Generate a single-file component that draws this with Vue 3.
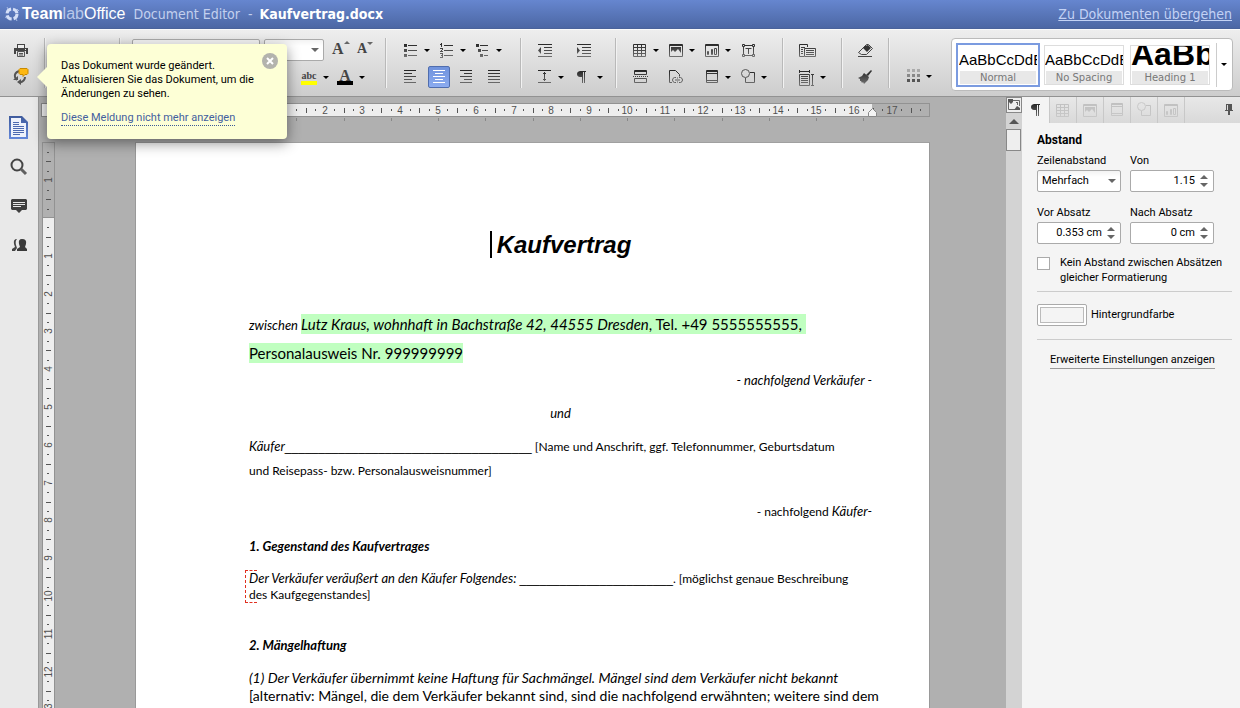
<script setup>
import { ref } from 'vue'

const CM = 37.8

const listTools = [
  [{ icon: 'bullets', label: 'Aufzählung', menu: true }, { icon: 'numbers', label: 'Nummerierung', menu: true }, { icon: 'levels', label: 'Liste mit mehreren Ebenen', menu: true }],
  [{ icon: 'left', label: 'Linksbündig' }, { icon: 'center', label: 'Zentriert', active: true }, { icon: 'right', label: 'Rechtsbündig' }, { icon: 'justify', label: 'Blocksatz' }],
]
const indentTools = [
  [{ icon: 'outdent', label: 'Einzug verkleinern', wide: true }, { icon: 'indent', label: 'Einzug vergrößern' }],
  [{ icon: 'spacing', label: 'Zeilenabstand', menu: true }, { icon: 'pilcrow', label: 'Formatierungszeichen', menu: true }],
]
const insertTools = [
  [{ icon: 'table', label: 'Tabelle', menu: true }, { icon: 'picture', label: 'Bild', menu: true }, { icon: 'chart', label: 'Diagramm', menu: true }, { icon: 'textbox', label: 'Textfeld' }],
  [{ icon: 'break', label: 'Seitenumbruch', wide: true }, { icon: 'link', label: 'Hyperlink', wide: true }, { icon: 'header', label: 'Kopfzeile', menu: true }, { icon: 'shape', label: 'Form', menu: true }],
]
const pageTools = [
  [{ icon: 'orient', label: 'Ausrichtung' }],
  [{ icon: 'size', label: 'Seitengröße', menu: true }],
]
const clearTools = [
  [{ icon: 'eraser', label: 'Formatierung löschen' }],
  [{ icon: 'brush', label: 'Format übertragen' }],
]
const schemeTools = [[], [{ icon: 'grid', label: 'Farbschema', menu: true }]]

const groups = [
  { name: 'list', rows: listTools },
  { name: 'indents', rows: indentTools },
  { name: 'insert', rows: insertTools },
  { name: 'layout', rows: pageTools },
  { name: 'clear', rows: clearTools },
  { name: 'scheme', rows: schemeTools },
]

const styles = [
  { name: 'Normal', sample: 'AaBbCcDdE', active: true },
  { name: 'No Spacing', sample: 'AaBbCcDdE' },
  { name: 'Heading 1', sample: 'AaBb', big: true },
]

const rail = [
  { icon: 'doc', label: 'Datei' },
  { icon: 'search', label: 'Suchen' },
  { icon: 'comment', label: 'Kommentare' },
  { icon: 'people', label: 'Benutzer' },
]

const tabs = [
  { icon: 'pilcrow', label: 'Absatz', active: true },
  { icon: 'table', label: 'Tabelle' },
  { icon: 'picture', label: 'Bild' },
  { icon: 'header', label: 'Kopfzeile' },
  { icon: 'shape', label: 'Form' },
  { icon: 'chart', label: 'Diagramm' },
]

function marks(from, to, origin) {
  const out = []
  for (let q = from; q <= to; q++) {
    if (q === 0) continue
    const pos = Math.round(origin + (q * CM) / 4)
    if (q % 4 === 0) out.push({ pos, text: Math.abs(q / 4) })
    else if (q % 2 === 0) out.push({ pos, size: 5 })
    else out.push({ pos, size: 2 })
  }
  return out
}
const hMarks = marks(5, 71, 114)
const vMarks = marks(-7, 60, 76)
const tabStops = Array.from({ length: 14 }, (_, i) => Math.round(114 + (i * CM * 5) / 4))

const noGap = ref(false)
const showTip = ref(true)
const lineMode = ref('Mehrfach')
const lineValue = ref('1.15')
const before = ref('0.353 cm')
const after = ref('0 cm')
const blankLong = '_'.repeat(37)
const blankShort = '_'.repeat(23)
</script>

<template>
  <div class="app">
    <svg class="sprite" aria-hidden="true">
      <defs>
        <linearGradient id="ink" gradientUnits="userSpaceOnUse" x1="0" y1="2" x2="0" y2="16">
          <stop offset="0" stop-color="#222" /><stop offset="1" stop-color="#707070" />
        </linearGradient>
        <linearGradient id="blue" x1="0" y1="0" x2="0" y2="1">
          <stop offset="0" stop-color="#3f5b9c" /><stop offset="1" stop-color="#6488da" />
        </linearGradient>
      </defs>
      <symbol id="i-bullets" viewBox="0 0 18 18"><path fill="url(#ink)" d="M2 3h3v3H2zM2 8h3v3H2zM2 13h3v3H2zM6 4h9v1H6zM6 9h9v1H6zM6 14h9v1H6z" /></symbol>
      <symbol id="i-numbers" viewBox="0 0 18 18"><path fill="url(#ink)" d="M3 2h1v4H3zM2 3h1v1H2zM2 7h3v1H2zM4 8h1v1H4zM3 9h1v1H3zM2 10h3v1H2zM2 12h3v1H2zM3 14h2v1H3zM4 13h1v1H4zM2 16h3v1H2zM4 15h1v1H4zM6 4h9v1H6zM6 9h9v1H6zM6 14h9v1H6z" /></symbol>
      <symbol id="i-levels" viewBox="0 0 18 18"><path fill="url(#ink)" d="M2 3h3v3H2zM4 8h3v3H4zM6 13h3v3H6zM6 4h8v1H6zM8 9h6v1H8zM10 14h4v1H10z" /></symbol>
      <symbol id="i-left" viewBox="0 0 18 18"><path fill="url(#ink)" d="M2 2h12v1H2zM2 5h8v1H2zM2 8h12v1H2zM2 11h8v1H2zM2 14h12v1H2z" /></symbol>
      <symbol id="i-center" viewBox="0 0 18 18"><path fill="#fff" d="M3 2h12v1H3zM5 5h8v1H5zM3 8h12v1H3zM5 11h8v1H5zM3 14h12v1H3z" /></symbol>
      <symbol id="i-right" viewBox="0 0 18 18"><path fill="url(#ink)" d="M2 2h12v1H2zM6 5h8v1H6zM2 8h12v1H2zM6 11h8v1H6zM2 14h12v1H2z" /></symbol>
      <symbol id="i-justify" viewBox="0 0 18 18"><path fill="url(#ink)" d="M2 2h12v1H2zM2 5h12v1H2zM2 8h12v1H2zM2 11h12v1H2zM2 14h12v1H2z" /></symbol>
      <symbol id="i-outdent" viewBox="0 0 18 18"><path fill="url(#ink)" d="M2 3h14v1H2zM8 6h8v1H8zM8 9h8v1H8zM8 12h8v1H8zM2 15h14v1H2zM5 6v7L2 9.500z" /></symbol>
      <symbol id="i-indent" viewBox="0 0 18 18"><path fill="url(#ink)" d="M2 3h14v1H2zM7 6h9v1H7zM7 9h9v1H7zM7 12h9v1H7zM2 15h14v1H2zM2 6v7l3-3.500z" /></symbol>
      <symbol id="i-spacing" viewBox="0 0 18 18"><path fill="url(#ink)" d="M2 2h13v1H2zM2 14h13v1H2zM8 4h1v9H8zM7 5h3v1H7zM7 11h3v1H7z" /></symbol>
      <symbol id="i-pilcrow" viewBox="0 0 18 18"><path fill="url(#ink)" d="M5 3h6v1h-1v11H9V4H8v11H7V9H5Q2 8.500 2 6t3-3z" /></symbol>
      <symbol id="i-table" viewBox="0 0 18 18"><path fill="none" stroke="url(#ink)" d="M2.500 3.500h12v12h-12zM2.500 6.500h12M2.500 9.500h12M2.500 12.500h12M6.500 3.500v12M10.500 3.500v12" /></symbol>
      <symbol id="i-picture" viewBox="0 0 18 18"><path fill="none" stroke="url(#ink)" d="M2.500 3.500h13v12h-13zM2 4.500h14" /><path fill="url(#ink)" d="M4 11V6h10v6l-3-4-3 3-2-2z" /></symbol>
      <symbol id="i-chart" viewBox="0 0 18 18"><path fill="none" stroke="url(#ink)" d="M2.500 3.500h13v12h-13zM2 4.500h14M4.500 10.500h1v3h-1zM8.500 8.500h1v5h-1zM11.500 7.500h2v6h-2z" /></symbol>
      <symbol id="i-textbox" viewBox="0 0 18 18"><path fill="none" stroke="url(#ink)" d="M4.500 4.500h10v10h-10zM6.500 7.500h6M9.500 7v6" /><path fill="#ddd" stroke="url(#ink)" d="M3.500 3.500h2v2h-2zM13.500 3.500h2v2h-2zM3.500 13.500h2v2h-2zM13.500 13.500h2v2h-2z" /></symbol>
      <symbol id="i-break" viewBox="0 0 18 18"><path fill="none" stroke="url(#ink)" d="M3.500 2.500h12v4h-12zM3.500 10.500h12v4h-12zM3 3.500h13" /><path stroke="#444" stroke-dasharray="1 1" d="M2 8.500h15" /></symbol>
      <symbol id="i-link" viewBox="0 0 18 18"><path fill="none" stroke="url(#ink)" d="M5 14.500H2.500v-12h6l4 4v2" /><path fill="none" stroke="#606060" d="M9 14.500H7.500Q5.500 14 5.500 12t2-2.500H9M12 9.500h1.500Q15.500 10 15.500 12t-2 2.500H12M8 12h5M10.500 9.500v1M10.500 13.500v1" /></symbol>
      <symbol id="i-header" viewBox="0 0 18 18"><path fill="none" stroke="url(#ink)" d="M3.500 2.500h11v12h-11zM3 3.500h12M3.500 5.500h11M3.500 12.500h11" /></symbol>
      <symbol id="i-shape" viewBox="0 0 18 18"><path fill="none" stroke="url(#ink)" d="M11 4.500h4.500v10h-9V10" /><circle cx="6.500" cy="5.500" r="4" fill="none" stroke="#555" /></symbol>
      <symbol id="i-orient" viewBox="0 0 18 18"><path fill="none" stroke="url(#ink)" d="M6 15.500H1.500v-12h8V6M3 6.500h4M3 8.500h2M3 10.500h2M3 12.500h2M6.500 7.500h11v8h-11zM8 9.500h8M8 11.500h8M8 13.500h8" /></symbol>
      <symbol id="i-size" viewBox="0 0 18 18"><path fill="none" stroke="url(#ink)" d="M1.500 6.500h10v11h-10zM3 8.500h7M3 10.500h7M3 12.500h7M3 14.500h7M1.500 2v3M11.500 2v3M1.500 3.500h10M13 6.500h3M13 17.500h3M14.500 6.500v11" /></symbol>
      <symbol id="i-eraser" viewBox="0 0 18 18"><path fill="none" stroke="#444" d="M2.500 11.500l8-8h2l4 4-6 6h-5zM2 15.500h14" /><path fill="#333" d="M9 5l3-1 3 3-4 4-4-4z" /></symbol>
      <symbol id="i-brush" viewBox="0 0 18 18"><path fill="#333" d="M15 2l1 1-4 5-2-1z" /><path fill="url(#ink)" d="M8 5l5 4-1 3-4 4-1-2-1 1-1-2-1 0 0-2-2-1 4-2z" /></symbol>
      <symbol id="i-grid" viewBox="0 0 18 18"><path fill="#aaa" d="M3 2h3v3H3zM8 2h3v3H8zM13 2h3v3h-3z" /><path fill="#888" d="M3 7h3v3H3zM8 7h3v3H8zM13 7h3v3h-3z" /><path fill="#555" d="M3 12h3v3H3zM8 12h3v3H8zM13 12h3v3h-3z" /></symbol>
      <symbol id="i-print" viewBox="0 0 18 18"><path fill="#444" d="M5 3h8v4h3v6h-2v-3H4v3H2V7h3z" /><path fill="#eee" d="M6 4h6v3H6zM13 8h1v1h-1z" /><path fill="none" stroke="#555" d="M5.500 10.500h7v5h-7zM7 12.500h4M7 14h4" /></symbol>
      <symbol id="i-sync" viewBox="0 0 18 18"><path fill="none" stroke="#555" stroke-width="2" d="M7 3Q2 5 3 9q0 1 2 3M13 9q0 4-5 5.500" /><path fill="#555" d="M1 12h5V8zM9 11v6l-4-3z" /><path fill="#fdb813" stroke="#c98a00" d="M8 .500h7l1 1v4l-1 1h-2l-2 2v-2H8l-1-1v-4z" /></symbol>
      <symbol id="i-file" viewBox="0 0 18 18"><path fill="none" stroke="url(#ink)" stroke-width="2" d="M5 4h8v10H5z" /></symbol>
      <symbol id="i-doc" viewBox="0 0 20 24"><path fill="url(#blue)" d="M0 0h13l6 6v17H0z" /><path fill="#eef2fb" d="M2 2h10v5h5v14H2z" /><path fill="#4c69b0" d="M4 6h6v1H4zM4 8h6v1H4zM4 10h11v1H4zM4 12h11v1H4zM4 14h11v1H4zM4 16h11v1H4zM4 18h7v1H4z" /></symbol>
      <symbol id="i-search" viewBox="0 0 20 24"><circle cx="8" cy="10" r="5.500" fill="none" stroke="#444" stroke-width="2" /><path stroke="#606060" stroke-width="3" d="M12 14l5 5" /></symbol>
      <symbol id="i-comment" viewBox="0 0 20 24"><path fill="#404040" d="M3 5h14l1 1v9l-1 1h-4l-3 3-3-3H3l-1-1V6z" /><path fill="#e9e9e9" d="M4 8h12v1H4zM4 10h12v1H4zM4 12h8v1H4z" /></symbol>
      <symbol id="i-people" viewBox="0 0 20 24"><path fill="#444" d="M8 6Q4 6 5 11l1 3-3 2v2h3l2-3-1-3q-1-4 1-6z" /><path fill="#3a3a3a" d="M13 6q5 0 4 5l-1 3 2 2v2H8v-2l3-2-1-3q-1-5 3-5z" /></symbol>
    </svg>

    <header class="titlebar">
      <svg class="logo" viewBox="0 0 16 16" aria-hidden="true"><circle cx="8" cy="8" r="5" fill="none" stroke="#d4dff7" stroke-width="3" stroke-dasharray="6 2" /><path fill="none" stroke="#a8bce6" d="M3 12l-2-1M13 3l2 2M4 3L3 1M12 13l1 2" /></svg>
      <span class="brand"><b>Team</b><i>lab</i>Office</span>
      <span class="product">Document Editor&nbsp; -</span>
      <h1>Kaufvertrag.docx</h1>
      <a href="#documents">Zu Dokumenten übergehen</a>
    </header>

    <div class="toolbar">
      <div class="group g-main">
        <button class="tool" aria-label="Drucken"><svg><use href="#i-print" /></svg></button>
        <button class="tool" aria-label="Aktualisieren"><svg><use href="#i-sync" /></svg></button>
      </div>
      <div class="group g-file">
        <div class="row">
          <button class="tool" aria-label="Kopieren"><svg><use href="#i-file" /></svg></button>
          <button class="tool" aria-label="Einfügen"><svg><use href="#i-file" /></svg></button>
        </div>
        <div class="row"></div>
      </div>
      <div class="group g-font">
        <div class="row">
          <div class="combo family"><select aria-label="Schriftart"><option></option></select></div>
          <div class="combo points"><select aria-label="Schriftgrad"><option></option></select></div>
          <button class="tool letter" aria-label="Schrift vergrößern">A<span class="tri up"></span></button>
          <button class="tool letter small" aria-label="Schrift verkleinern">A<span class="tri"></span></button>
        </div>
        <div class="row colours">
          <button class="tool menu swatch" aria-label="Hervorheben"><span class="mark yellow">abc</span><span class="caret"></span></button>
          <button class="tool menu swatch" aria-label="Schriftfarbe"><span class="mark black">A</span><span class="caret"></span></button>
        </div>
      </div>
      <div v-for="g in groups" :key="g.name" class="group" :class="'g-' + g.name">
        <div v-for="(row, r) in g.rows" :key="r" class="row">
          <button v-for="t in row" :key="t.icon" class="tool" :class="{ menu: t.menu, wide: t.wide, active: t.active }" :aria-label="t.label">
            <svg><use :href="'#i-' + t.icon" /></svg>
            <span v-if="t.menu" class="caret"></span>
          </button>
        </div>
      </div>
      <div class="gallery">
        <button v-for="s in styles" :key="s.name" class="style" :class="{ active: s.active, big: s.big }">
          <span class="sample">{{ s.sample }}</span>
          <span class="caption">{{ s.name }}</span>
        </button>
        <button class="more" aria-label="Weitere Formatvorlagen"><span class="caret"></span></button>
      </div>
    </div>

    <div class="body">
      <nav class="rail">
        <button v-for="r in rail" :key="r.icon" :aria-label="r.label"><svg><use :href="'#i-' + r.icon" /></svg></button>
      </nav>

      <main class="editor">
        <div class="corner"><span></span></div>
        <div class="hruler">
          <svg>
            <rect class="edge" x="0" y="0" width="795" height="14" />
            <rect class="bar" x="1" y="1" width="793" height="12" />
            <rect class="live" x="114" y="1" width="623" height="12" />
            <template v-for="m in hMarks" :key="m.pos">
              <text v-if="m.text" :x="m.pos" y="11">{{ m.text }}</text>
              <rect v-else class="tick" :x="m.pos" :y="7 - Math.floor(m.size / 2)" width="1" :height="m.size" />
            </template>
            <rect v-for="t in tabStops" :key="t" class="stop" :x="t" y="15" width="1" height="3" />
            <path class="marker" d="M733.500 13.500v-4l4-4 4 4v4z" />
          </svg>
        </div>
        <div class="vruler">
          <svg>
            <rect class="edge" x="0" y="0" width="13" height="700" />
            <rect class="bar" x="1" y="1" width="11" height="74" />
            <rect class="live" x="1" y="76" width="11" height="624" />
            <template v-for="m in vMarks" :key="m.pos">
              <text v-if="m.text" :transform="`translate(10 ${m.pos}) rotate(-90)`">{{ m.text }}</text>
              <rect v-else class="tick" :x="6 - Math.floor(m.size / 2)" :y="m.pos" :width="m.size" height="1" />
            </template>
          </svg>
        </div>
        <div class="canvas">
          <article class="page">
            <h2><span class="cursor"></span>Kaufvertrag</h2>
            <p class="party"><em class="minor">zwischen </em><mark><em>Lutz Kraus, wohnhaft in Bachstraße 42, 44555 Dresden</em>, Tel. +49 5555555555, </mark><br /><mark>Personalausweis Nr. 999999999</mark></p>
            <p class="end"><em>- nachfolgend Verkäufer -</em></p>
            <p class="mid"><em>und</em></p>
            <p class="buyer"><em>Käufer</em><span class="blank">{{ blankLong }}</span> [Name und Anschrift, ggf. Telefonnummer, Geburtsdatum<br />und Reisepass- bzw. Personalausweisnummer]</p>
            <p class="end second">- nachfolgend <em>Käufer-</em></p>
            <h3>1. Gegenstand des Kaufvertrages</h3>
            <p class="locked"><em>Der Verkäufer veräußert an den Käufer Folgendes: </em><span class="blank">{{ blankShort }}</span>. [möglichst genaue Beschreibung<br />des Kaufgegenstandes]</p>
            <h3 class="later">2. Mängelhaftung</h3>
            <p class="liability"><em>(1) Der Verkäufer übernimmt keine Haftung für Sachmängel. Mängel sind dem Verkäufer nicht bekannt</em><br />[alternativ: Mängel, die dem Verkäufer bekannt sind, sind die nachfolgend erwähnten; weitere sind dem</p>
          </article>
        </div>
      </main>

      <div class="scroll">
        <button class="rulers" aria-label="Lineale"><svg viewBox="0 0 14 14"><path fill="none" stroke="#666" d="M1.500 3v8.500H8M5 2.500h7.500V8M9 4.500h2M10.500 4v3" /><path fill="#555" d="M1 1h5v3L4 6 1 3zM7 12l3-4 3 2v2z" /></svg></button>
        <button class="up" aria-label="Nach oben"><span></span></button>
        <div class="thumb"></div>
      </div>

      <aside class="panel">
        <div class="tabs">
          <button v-for="t in tabs" :key="t.icon" :class="{ active: t.active }" :aria-label="t.label"><svg><use :href="'#i-' + t.icon" /></svg></button>
          <button class="pin" aria-label="Anheften"><svg viewBox="0 0 8 12"><path fill="#555" d="M1 0h6v6h1v1H5v4H3V7H0V6h1z" /><path fill="#ddd" d="M2 1h1v5H2z" /></svg></button>
        </div>
        <form class="settings" @submit.prevent>
          <h4>Abstand</h4>
          <div class="pair">
            <div class="field"><label for="mode">Zeilenabstand</label>
              <div class="combo"><select id="mode" v-model="lineMode"><option>Mehrfach</option></select></div></div>
            <div class="field"><label for="line">Von</label>
              <div class="spin"><input id="line" v-model="lineValue" type="text" /><button aria-label="Zeilenabstand ändern"><span class="tri up"></span><span class="tri"></span></button></div></div>
            <div class="field"><label for="before">Vor Absatz</label>
              <div class="spin"><input id="before" v-model="before" type="text" /><button aria-label="Abstand davor ändern"><span class="tri up"></span><span class="tri"></span></button></div></div>
            <div class="field"><label for="after">Nach Absatz</label>
              <div class="spin"><input id="after" v-model="after" type="text" /><button aria-label="Abstand danach ändern"><span class="tri up"></span><span class="tri"></span></button></div></div>
          </div>
          <label class="check"><input v-model="noGap" type="checkbox" /><span>Kein Abstand zwischen Absätzen<br />gleicher Formatierung</span></label>
          <div class="colour"><button id="bg" aria-labelledby="bg-label"><span></span></button><label id="bg-label" for="bg">Hintergrundfarbe</label></div>
          <div class="advanced"><a href="#advanced">Erweiterte Einstellungen anzeigen</a></div>
        </form>
      </aside>
    </div>

    <div v-if="showTip" class="tip" role="status">
      <button aria-label="Schließen" @click="showTip = false"><svg viewBox="0 0 16 16"><circle cx="8" cy="8" r="8" fill="#b3b3ad" /><path stroke="#fff" stroke-width="2" d="M5 5l6 6M11 5l-6 6" /></svg></button>
      <p>Das Dokument wurde geändert.<br />Aktualisieren Sie das Dokument, um die<br />Änderungen zu sehen.</p>
      <a href="#hide">Diese Meldung nicht mehr anzeigen</a>
    </div>
  </div>
</template>

<style>
body { margin: 0; }
</style>

<style scoped>
* { box-sizing: border-box; }
.app {
  position: relative;
  display: flex;
  flex-direction: column;
  height: 100vh;
  overflow: hidden;
  background: #b0b0b0;
  color: #000;
  font-family: Roboto, "DejaVu Sans Condensed", sans-serif;
  font-size: 11px;
}
.sprite { position: absolute; width: 0; height: 0; }
button { padding: 0; border: 0; background: none; font: inherit; color: inherit; }
h1, h2, h3, h4, p { margin: 0; }

.titlebar {
  display: flex;
  flex: none;
  align-items: center;
  height: 29px;
  padding: 0 8px 1px 4px;
  background: linear-gradient(#6686cf, #4c67a4);
  border-bottom: 1px solid #4a639b;
  color: #fff;
  font-family: "DejaVu Sans Condensed", "DejaVu Sans", sans-serif;
  font-size: 14px;
}
.logo { width: 16px; height: 16px; margin-right: 2px; }
.brand { margin-right: 8px; font-family: "Liberation Sans", sans-serif; font-size: 16px; }
.brand i { font-style: normal; color: #b9c8ea; }
.product { margin-right: 7px; color: #c3d0ee; }
.titlebar h1 { flex: 1; font-size: 14px; }
.titlebar a { color: #c3d2f5; }

.toolbar {
  display: flex;
  flex: none;
  align-items: flex-start;
  height: 68px;
  padding-top: 8px;
  background: linear-gradient(#eee, #cdcdcd);
  border-top: 1px solid #fafafa;
  border-bottom: 1px solid #929292;
}
.group {
  display: flex;
  flex: none;
  flex-direction: column;
  gap: 3px;
  height: 50px;
  padding-left: 9px;
  border-left: 1px solid #b9b9b9;
  box-shadow: inset 1px 0 #f2f2f2;
}
.g-main { width: 44px; padding-left: 7px; border: 0; box-shadow: none; }
.g-file { width: 75px; padding-left: 8px; }
.g-font { width: 266px; padding-left: 12px; }
.g-list { width: 135px; padding-left: 11px; }
.g-indents { width: 95px; padding-left: 10px; }
.g-insert { width: 167px; padding-left: 10px; }
.g-layout { width: 59px; padding-left: 10px; }
.g-clear { width: 47px; padding-left: 9px; }
.g-scheme { width: 60px; padding-left: 10px; }
.row { display: flex; align-items: center; height: 24px; }
.tool {
  position: relative;
  display: flex;
  flex: none;
  align-items: center;
  justify-content: flex-start;
  width: 28px;
  height: 24px;
  padding-left: 5px;
}
.tool svg { flex: none; width: 18px; height: 18px; }
.tool.menu, .tool.wide { width: 36px; }
.g-indents .tool { width: 39px; }
.tool.active {
  width: 22px;
  height: 22px;
  margin: 0 3px;
  padding-left: 1px;
  border: 1px solid #4f6dae;
  border-radius: 2px;
  background: linear-gradient(#6f92dc, #8cacf0);
}
.caret { width: 0; height: 0; margin-left: 4px; border: 3px solid transparent; border-top-color: #000; border-bottom: 0; }
.tri { width: 0; height: 0; border: 4px solid transparent; border-top-color: #666; border-bottom: 0; }
.tri.up { border-top: 0; border-bottom: 4px solid #666; }
.combo {
  position: relative;
  width: 84px;
  height: 22px;
}
.combo::after {
  content: "";
  position: absolute;
  top: 9px;
  right: 5px;
  border: 4px solid transparent;
  border-top-color: #666;
  border-bottom: 0;
  pointer-events: none;
}
.combo select {
  width: 100%;
  height: 100%;
  padding: 0 4px;
  appearance: none;
  border: 1px solid #aaa;
  border-radius: 2px;
  background: #fff linear-gradient(to bottom, #f3f3f3, #fff 6px);
  color: #000;
  font: inherit;
}
.family { width: 128px; margin-right: 4px; }
.points { width: 60px; margin-right: 3px; }
.letter { width: 25px; font: bold 16px "Liberation Serif", serif; color: #444; align-items: flex-start; padding-top: 2px; }
.letter.small { font-size: 14px; padding-top: 3px; }
.letter .tri { border-width: 3px 3px 0; margin-top: 1px; }
.letter .tri.up { border-width: 0 3px 3px; }
.colours { padding-left: 163px; }
.swatch { width: 40px; padding-left: 6px; }
.swatch .caret { margin-left: 6px; }
.mark { width: 16px; height: 16px; border-bottom: 4px solid #000; font: bold 16px/13px "Liberation Serif", serif; color: #444; text-align: center; }
.mark.yellow { border-color: #ff0; font-size: 10px; }

.gallery {
  display: flex;
  align-items: center;
  flex: none;
  gap: 4px;
  width: 282px;
  height: 53px;
  margin: 0 7px 0 auto;
  padding: 0 4px;
  border: 1px solid #bbb;
  border-radius: 4px;
  background: #fff;
}
.style {
  display: flex;
  flex: none;
  flex-direction: column;
  width: 80px;
  height: 40px;
  border: 1px solid #ddd;
  background: #fff;
  overflow: hidden;
}
.style.active { width: 84px; height: 44px; padding: 1px; border: 2px solid #7b9be0; }
.style.big { margin-left: 2px; }
.sample { display: flex; align-items: center; height: 25px; padding-top: 3px; overflow: hidden; white-space: nowrap; font: 15px "Liberation Sans", sans-serif; }
.big .sample { align-items: flex-end; padding: 0 0 3px; font-size: 32px; font-weight: bold; line-height: 27px; }
.caption { flex: none; margin: 0 1px; height: 13px; background: #e8e8e8; color: #777; font: 10px/13px "DejaVu Sans", sans-serif; text-align: center; }
.more { display: flex; align-items: center; width: 18px; height: 44px; margin-left: 2px; border-left: 1px solid #ccc; }

.body { display: flex; flex: 1; min-height: 0; }
.rail { display: flex; flex: none; flex-direction: column; align-items: center; gap: 14px; width: 39px; padding-top: 19px; background: #e9e9e9; border-right: 1px solid #999; }
.rail button { display: flex; width: 20px; height: 25px; }
.rail svg { width: 20px; height: 24px; }

.editor {
  display: grid;
  flex: 1;
  grid-template: 45px 1fr / 20px 1fr;
  min-width: 0;
  overflow: hidden;
}
.corner { padding: 6px 2px; }
.corner span { display: block; width: 14px; height: 14px; border: 1px solid #888; background: #eee; }
.hruler { padding-top: 6px; min-width: 0; }
.hruler svg { display: block; width: 795px; height: 20px; margin: 0 auto; }
.vruler { padding-left: 3px; overflow: hidden; }
.vruler svg { display: block; width: 13px; height: 700px; }
.edge { fill: #929292; }
.bar { fill: #b0b0b0; }
.live { fill: #eee; }
.tick { fill: #555; }
.stop { fill: #888; }
.marker { fill: #f4f4f4; stroke: #888; }
.editor text { fill: #505050; font: 10px "Liberation Sans", sans-serif; text-anchor: middle; }
.canvas { min-width: 0; overflow: hidden; }

.page {
  width: 795px;
  min-height: 1123px;
  margin: 0 auto;
  padding: 88px 57px 0 113px;
  background: #fff;
  border: 1px solid #999;
  border-top-color: #a0a0a0;
  font: 12px/24px Lato, sans-serif;
  white-space: nowrap;
}
.page h2 { display: flex; justify-content: center; font: italic bold 24px/28px "Liberation Sans", sans-serif; }
.page em { font-size: 13px; line-height: 1; }
.cursor { width: 2px; height: 27px; margin-right: 5px; background: #000; }
.party { margin: 51px 0 1px; font-size: 15px; line-height: 29px; }
.party mark { padding: 1px 0; background: #c0ffc0; color: #000; white-space: pre; }
.party mark em { font-size: 15px; }
.end { text-align: right; }
.mid { margin-top: 9px; text-align: center; }
.buyer { margin-top: 9px; }
.blank { font-family: "Liberation Sans", sans-serif; line-height: 1; }
.second { margin-top: 17px; }
.page h3 { margin-top: 10px; font: italic bold 13px/24px Lato, sans-serif; }
.locked { position: relative; margin-top: 13px; line-height: 16px; }
.locked::before { content: ""; position: absolute; top: -1px; left: -4px; width: 11px; height: 31px; border: 1px dashed #e03020; border-right: 0; }
.page .later { margin-top: 30px; }
.liability { margin-top: 12px; font-size: 14px; line-height: 18px; }
.liability em { font-size: 14px; }

.scroll { flex: none; width: 16px; background: #d3d3d3; }
.scroll button { display: flex; align-items: center; justify-content: center; width: 16px; height: 16px; }
.scroll .rulers { border: 1px solid #888; background: #eee; }
.rulers svg { width: 14px; height: 14px; }
.up span { border: 5px solid transparent; border-top: 0; border-bottom: 5px solid #555; }
.thumb { width: 15px; height: 22px; border: 1px solid #888; background: #eee; }

.panel { flex: none; width: 218px; background: #f4f4f4; }
.tabs { display: flex; height: 26px; background: linear-gradient(#e8e8e8, #d9d9d9); }
.tabs button { display: flex; align-items: center; justify-content: center; width: 27px; height: 26px; border-right: 1px solid #c8c8c8; }
.tabs svg { width: 18px; height: 18px; opacity: 0.18; }
.tabs .active { width: 28px; padding-left: 4px; background: #f4f4f4; }
.tabs .active svg { opacity: 1; }
.tabs .pin { width: 22px; margin-left: auto; border: 0; }
.tabs .pin svg { width: 8px; height: 12px; opacity: 1; }
.settings { padding: 9px 8px 0 15px; line-height: 16px; }
.settings h4 { font-size: 12px; line-height: 16px; }
.pair { display: grid; grid-template-columns: 84px 84px; gap: 13px 9px; margin-top: 5px; }
.field label { display: block; height: 17px; }
.spin { position: relative; display: flex; height: 22px; border: 1px solid #aaa; border-radius: 2px; background: #fff; }
.spin input { flex: 1; min-width: 0; padding: 0; border: 0; background: none; font: inherit; color: #000; text-align: right; }
.spin button { display: flex; flex-direction: column; align-items: center; justify-content: center; gap: 4px; width: 18px; }
.check { display: flex; gap: 10px; margin-top: 11px; padding-bottom: 6px; border-bottom: 1px solid #ccc; line-height: 15px; white-space: nowrap; }
.check input { flex: none; width: 13px; height: 13px; margin: 2px 0 0; appearance: none; border: 1px solid #aaa; background: #fff; }
.colour { display: flex; align-items: center; gap: 4px; padding: 12px 0 13px; border-bottom: 1px solid #ccc; }
.colour button { width: 50px; height: 22px; padding: 2px; border: 1px solid #aaa; border-radius: 2px; background: #fff; }
.colour span { display: block; height: 16px; border: 1px solid #bbb; background: #f4f4f4; }
.advanced { padding: 12px 0 0 13px; }
.advanced a { display: inline-block; border-bottom: 1px solid #999; color: #000; text-decoration: none; }

.tip {
  position: absolute;
  top: 44px;
  left: 47px;
  width: 240px;
  height: 95px;
  padding: 15px 14px;
  border-radius: 4px;
  background: #fdffd6;
  box-shadow: 0 4px 14px rgba(0, 0, 0, 0.45);
  line-height: 14px;
  white-space: nowrap;
}
.tip::before { content: ""; position: absolute; top: 23px; left: -10px; border: 10px solid transparent; border-right-color: #fdffd6; border-left: 0; }
.tip button { position: absolute; top: 9px; right: 9px; width: 16px; height: 16px; }
.tip svg { display: block; width: 16px; height: 16px; }
.tip a { display: inline-block; margin-top: 10px; border-bottom: 1px dotted #3b5998; color: #445f9f; text-decoration: none; }
</style>
